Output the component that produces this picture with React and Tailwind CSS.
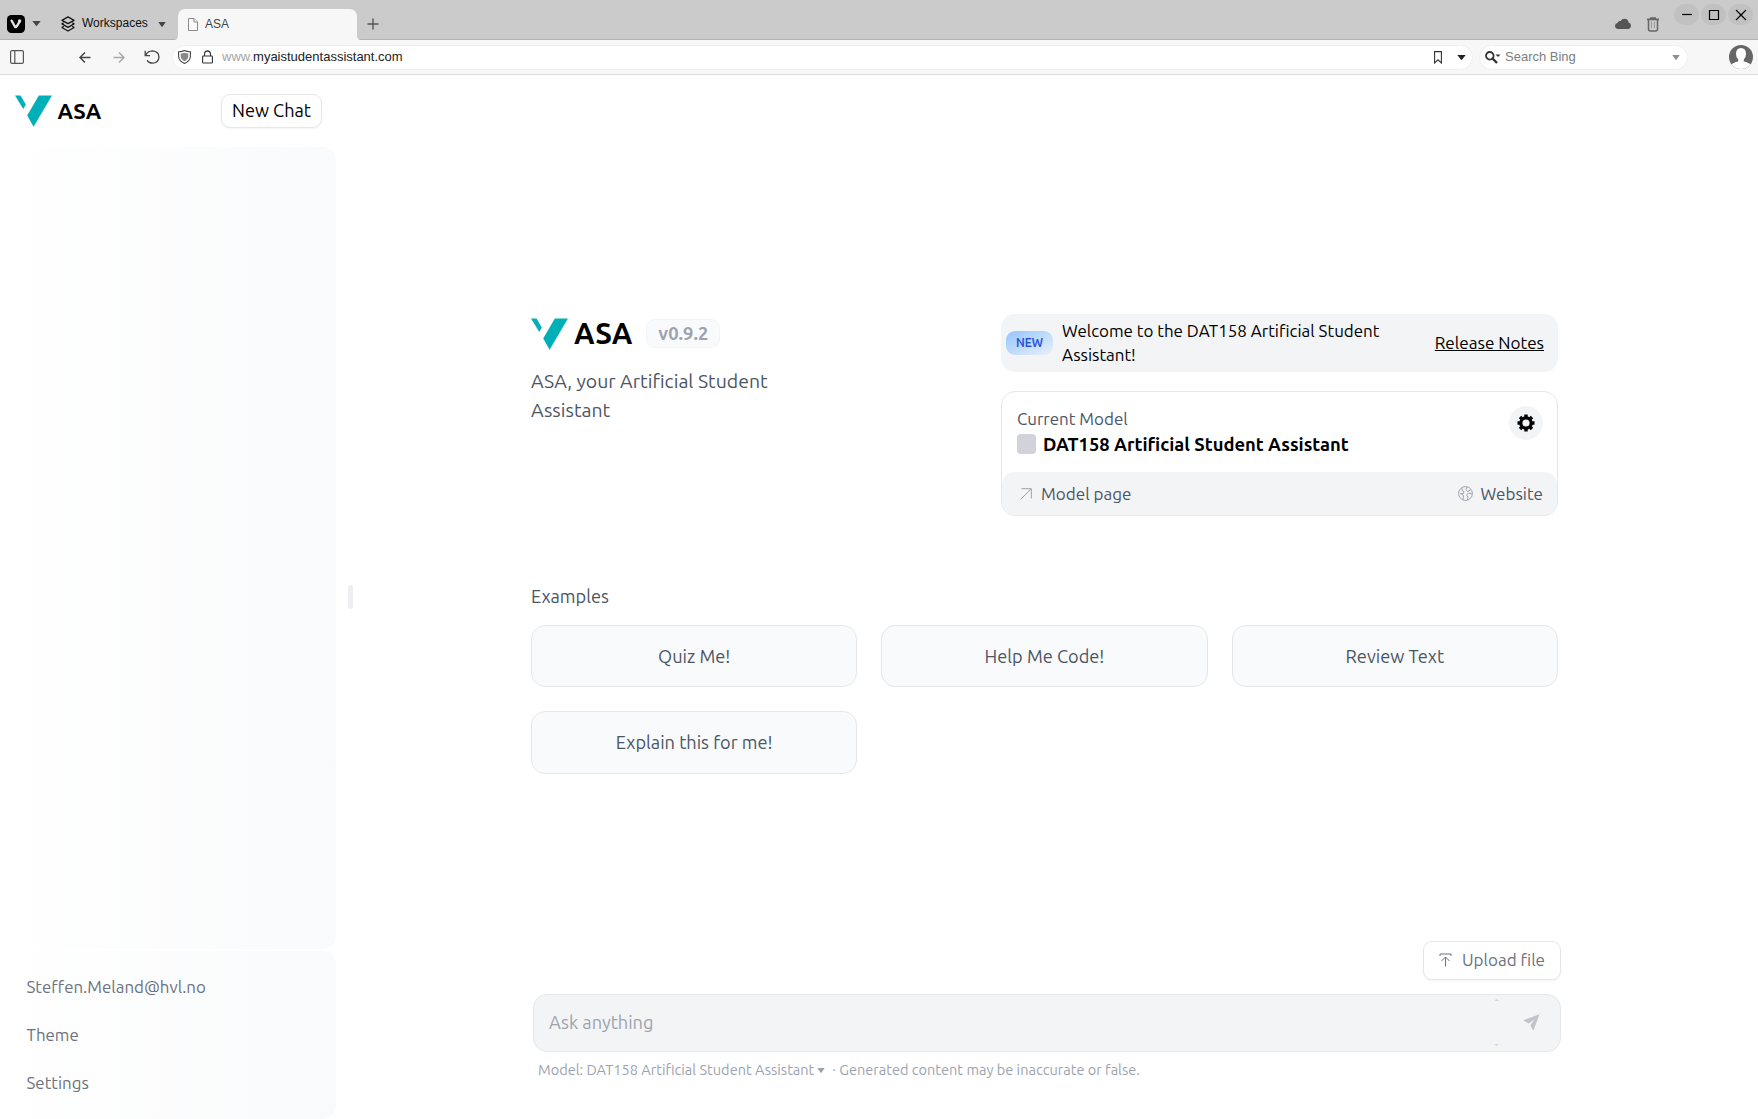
const Caret = ({ className = "", w = 8, h = 5 }) => (
  <svg className={className} width={w} height={h} viewBox="0 0 8 5" preserveAspectRatio="none" fill="currentColor"><path d="M0.3 0H7.7L4.6 4.6Q4 5.2 3.4 4.6Z" /></svg>
);

const Logo = ({ className }) => (
  <svg className={className} width="37" height="32" viewBox="0 0 37 32" fill="#00b0b9">
    <path d="M0 0.5H5.6L10.8 9.6L8.3 14Z" />
    <path d="M23.8 0.5H37L18.6 31.8L12.2 20.5Z" />
  </svg>
);

function TabBar() {
  return (
    <div className="flex h-10 items-stretch border-b border-[#b2b2b2] bg-[#cbcbcb] text-[12px] text-[#111]">
      <svg className="mt-[15px] ml-[7px]" width="18" height="18" viewBox="0 0 18 18">
        <rect width="18" height="18" rx="4.5" fill="#000" />
        <path d="M4.6 5.6L8.3 12.2H9.1Q10.1 10.8 12.6 6.6" fill="none" stroke="#e4e4e4" strokeWidth="2.3" strokeLinecap="round" strokeLinejoin="round" />
        <circle cx="12.6" cy="6" r="1.7" fill="#e4e4e4" />
      </svg>
      <Caret className="mt-[21px] ml-[7px] text-[#444]" w={9} h={5} />
      <svg className="mt-[16px] ml-[20px]" width="14" height="16" viewBox="0 0 15 16" preserveAspectRatio="none" fill="none" stroke="#111" strokeWidth="1.3" strokeLinejoin="round">
        <path d="M7.5 0.9L14 4.3L7.5 7.7L1 4.3Z" />
        <path d="M3 6.8L1 7.9L7.500 11.300L14 7.900L12 6.800" />
        <path d="M3 10.4L1 11.500L7.500 15L14 11.500L12 10.400" />
      </svg>
      <span className="mt-[14px] ml-[7px] w-[67px] leading-[18px]">Workspaces</span>
      <Caret className="mt-[22px] ml-[9px] text-[#444]" w={8} h={5} />
      <div className="relative ml-[12px] mt-[9px] -mb-px flex w-[179px] rounded-t-[7px] bg-[#f7f7f7] text-[#444]">
        <svg className="absolute bottom-0 -left-1" width="4" height="4" viewBox="0 0 4 4"><path d="M4 0V4H0Q3.5 4 4 0Z" fill="#f7f7f7" /></svg>
        <svg className="absolute bottom-0 -right-1" width="4" height="4" viewBox="0 0 4 4"><path d="M0 0V4H4Q0.500 4 0 0Z" fill="#f7f7f7" /></svg>
        <svg className="mt-[9px] ml-[10px]" width="10" height="13" viewBox="0 0 10 13" fill="#fafafa" stroke="#8a8a8a">
          <path d="M0.500 0.500H6L9.500 4V12.500H0.500Z" /><path d="M6 0.500V4H9.500" />
        </svg>
        <span className="mt-[6px] ml-[7px] leading-[18px]">ASA</span>
      </div>
      <svg className="mt-[18px] ml-[10px]" width="12" height="12" viewBox="0 0 12 12" stroke="#555" strokeWidth="1.4"><path d="M6 0.500V11.500M0.500 6H11.500" /></svg>
      <div className="ml-auto flex">
        <svg className="mt-[18px]" width="16" height="11" viewBox="0 0 16 11" fill="#555"><path d="M3.200 11Q0 10.800 0 7.800Q0.200 5.300 2.500 5Q3.200 2.600 5.600 3Q6.800 0.800 9.400 0.700Q13.200 0.900 13.600 4.600Q16 5.200 16 7.800Q15.800 10.800 13 11Z" /></svg>
        <svg className="mt-[17px] ml-[15px]" width="14" height="15" viewBox="0 0 14 15" fill="none" stroke="#666">
          <path d="M1 2.400H13M4 1H10" strokeWidth="1.600" /><path d="M2.500 3V12Q2.500 14 4.500 14H9.500Q11.500 14 11.500 12V3" strokeWidth="1.500" /><path d="M5.500 4.500V11M8.500 4.500V11" stroke="#999" />
        </svg>
        <div className="mt-1 ml-[14px] flex gap-[2px]">
          {["M1 5.500H11", "M1.500 1.500H10.500V10.500H1.500Z", "M1 1L11 11M11 1L1 11"].map((d) => (
            <div key={d} className="flex h-[21px] w-[25px] items-center justify-center rounded-full bg-[#c1c1c1]">
              <svg width="12" height="12" viewBox="0 0 12 12" fill="none" stroke="#000" strokeWidth="1.200" strokeLinejoin="round"><path d={d} /></svg>
            </div>
          ))}
        </div>
        <div className="w-[5px]" />
      </div>
    </div>
  );
}

function AddressBar() {
  return (
    <div className="flex h-[35px] items-center border-b border-[#dcdcdc] bg-[#f7f7f7] text-[13px]">
      <svg className="ml-[10px]" width="14" height="14" viewBox="0 0 14 14" fill="none" stroke="#555" strokeWidth="1.200"><rect x="0.600" y="0.600" width="12.800" height="12.800" rx="1.500" /><path d="M4.800 1V13" /></svg>
      <svg className="ml-[55px]" width="12" height="11" viewBox="0 0 12 11" fill="none" stroke="#444" strokeWidth="1.500"><path d="M11.500 5.500H1M6 0.500L1 5.500L6 10.500" /></svg>
      <svg className="ml-[22px]" width="12" height="11" viewBox="0 0 12 11" fill="none" stroke="#a8a8a8" strokeWidth="1.500"><path d="M0.500 5.500H11M6 0.500L11 5.500L6 10.500" /></svg>
      <svg className="ml-[19px]" width="16" height="14" viewBox="0 0 16 14" fill="none" stroke="#444" strokeWidth="1.300"><path d="M1.800 5.200Q3.400 1 8.500 0.800Q14.800 1.400 15 7Q14.600 13 8.500 13.200Q4.800 13 3 10.300" /><path d="M1.200 0.800V5.600H6" /></svg>
      <div className="ml-[12px] flex h-[25px] w-[1301px] items-center rounded-full border border-[#efefef] bg-white">
        <svg className="ml-[5px]" width="13" height="14" viewBox="0 0 13 14" fill="none"><path d="M0.600 1.800Q4 1.900 6.500 0.600Q9 1.900 12.400 1.800V6.500Q12 11.200 6.500 13.400Q1 11.200 0.600 6.500Z" stroke="#444" strokeWidth="1.100" /><path d="M2.700 3.600Q5 3.500 6.500 2.800Q8 3.500 10.300 3.600V6.600Q10 9.600 6.500 11.200Q3 9.600 2.700 6.600Z" fill="#888" /></svg>
        <svg className="ml-[11px]" width="11" height="14" viewBox="0 0 11 14" fill="none" stroke="#333" strokeWidth="1.100"><rect x="0.600" y="6" width="9.800" height="7" rx="0.800" /><path d="M2.500 6V3.800Q2.700 1 5.500 0.900Q8.300 1 8.500 3.800V6" /></svg>
        <span className="ml-[9px] text-[#a5a5a5]">www.<span className="text-[#222]">myaistudentassistant.com</span></span>
        <svg className="ml-auto" width="8" height="13" viewBox="0 0 8 13" fill="none" stroke="#333" strokeWidth="1.100"><path d="M0.600 0.600H7.400V12L4 8.800L0.600 12Z" /></svg>
        <Caret className="mr-[6px] ml-[15px] text-[#222]" w={9} h={5} />
      </div>
      <div className="ml-[6px] flex h-[25px] w-[209px] items-center rounded-full border border-[#efefef] bg-white">
        <svg className="ml-[5px]" width="16" height="13" viewBox="0 0 16 13" fill="none" stroke="#333"><circle cx="4.800" cy="4.800" r="3.800" strokeWidth="1.800" /><path d="M7.500 7.500L12 12" strokeWidth="2.400" /><path d="M10.500 3.500H15.500L13 6Z" fill="#333" stroke="none" /></svg>
        <span className="ml-[4px] text-[#7d7d7d]">Search Bing</span>
        <Caret className="mr-[7px] ml-auto text-[#8e8e8e]" w={8} h={5} />
      </div>
      <svg className="ml-auto mr-[5px]" width="24" height="24" viewBox="0 0 24 24">
        <defs><clipPath id="avatar"><circle cx="12" cy="12" r="12" /></clipPath></defs>
        <g clipPath="url(#avatar)"><rect width="24" height="24" fill="#666" /><path d="M12 3Q17 3.200 17 9Q17 12.500 14.800 14.500V16.500Q20 17.500 22 20V24H2V20Q4 17.500 9.200 16.500V14.500Q7 12.500 7 9Q7 3.200 12 3Z" fill="#fff" /></g>
      </svg>
    </div>
  );
}

const panel = "rounded-r-[14px] bg-linear-to-l from-gray-50 from-0% to-white to-100%";

function Sidebar() {
  return (
    <nav className="flex w-[336px] shrink-0 flex-col">
      <div className="flex h-[72px] items-center pr-[14px]">
        <Logo className="ml-[15px]" />
        <span className="-mt-0.5 ml-[5.5px] text-[22px] font-bold text-black">ASA</span>
        <button className="ml-auto h-[34px] w-[101px] rounded-[9px] border border-gray-200 bg-white text-[18.1px] text-black shadow-xs">New Chat</button>
      </div>
      <div className={`${panel} h-[802px]`} />
      <div className={`${panel} mt-[2px] flex h-[168px] flex-col pt-3 pl-[26.500px] text-[16.9px] leading-[48px] text-[#6b7280]`}>
        <span>Steffen.Meland@hvl.no</span>
        <span>Theme</span>
        <span>Settings</span>
      </div>
    </nav>
  );
}

function Intro() {
  return (
    <div className="pt-px">
      <div className="flex h-[38px] items-center">
        <Logo className="" />
        <span className="ml-[6px] text-[29.3px] font-bold text-black">ASA</span>
        <span className="-mt-px ml-[14px] flex h-[29px] w-[74px] items-center justify-center rounded-[9px] border border-gray-100 bg-gray-50 text-[18.4px] font-bold text-[#9ca3af]">v0.9.2</span>
      </div>
      <p className="mt-[14px] w-[260px] text-[19.45px] leading-[29px] text-[#4b5563]">ASA, your Artificial Student Assistant</p>
    </div>
  );
}

function ModelInfo() {
  return (
    <div>
      <div className="flex h-[58px] items-center rounded-[14px] bg-gray-100 pr-[14px] pl-[5px] text-[16.97px] text-black">
        <span className="flex h-6 w-[47px] items-center justify-center rounded-[9px] bg-linear-to-br from-[#93c5fd] to-[#eaf0f8] text-[12px] font-medium text-[#1d4ed8] [-webkit-text-stroke:0.2px]">NEW</span>
        <span className="ml-[9px] w-[330px] leading-6">Welcome to the DAT158 Artificial Student Assistant!</span>
        <a className="ml-auto text-[17.1px] underline">Release Notes</a>
      </div>
      <div className="mt-[19px] flex h-[125px] flex-col justify-between rounded-[14px] border border-gray-200">
        <div className="flex justify-between pt-[15px] pr-[14px] pl-[15px]">
          <div>
            <div className="text-[16.97px] leading-6 text-[#4b5563]">Current Model</div>
            <div className="flex h-[27px] items-center text-[18.4px] font-bold text-black">
              <span className="-mt-px mr-[7px] h-[20px] w-[19px] rounded-[4px] bg-[#d1d2da]" />
              DAT158 Artificial Student Assistant
            </div>
          </div>
          <div className="-mt-px flex size-[34px] items-center justify-center rounded-full bg-gray-100">
            <svg width="18" height="18" viewBox="0 0 18 18" fill="none" stroke="#000">
              <circle cx="9" cy="9" r="5.200" strokeWidth="3.200" />
              <path d="M9 0.500V3M9 15V17.500M0.500 9H3M15 9H17.500M3 3L4.800 4.800M13.200 13.200L15 15M3 15L4.800 13.200M13.200 4.800L15 3" strokeWidth="3.400" />
            </svg>
          </div>
        </div>
        <div className="flex h-[43px] items-center rounded-[13px] bg-gray-100 pr-[14px] pl-[18px] text-[17.05px] text-[#4b5563]">
          <svg width="12" height="12" viewBox="0 0 12 12" fill="none" stroke="#9ca3af"><path d="M0.500 11.500L11 1M1.500 0.700H11.300V10.500" /></svg>
          <span className="ml-[9px]">Model page</span>
          <svg className="ml-auto" width="15" height="15" viewBox="0 0 15 15" fill="none" stroke="#9ca3af" strokeLinejoin="round"><circle cx="7.500" cy="7.500" r="6.900" /><path d="M4 2V4.500L6 5.500L5.500 7.500L2.500 7.500M2.500 7.500L5.500 9.500L5 13.500M9 1L8 3.500L9.500 5.500L12.500 4M14 8L10.500 7L8.500 9L10 11L9.500 13.800" /></svg>
          <span className="ml-[8px]">Website</span>
        </div>
      </div>
    </div>
  );
}

function Composer() {
  return (
    <div className="ml-[2px] mr-[-3px] flex flex-col">
      <button className="flex h-[39px] w-[138px] items-center self-end rounded-[9px] border border-gray-200 bg-white pb-px pl-[15px] text-[17px] text-[#6b7280] shadow-xs">
        <svg width="13" height="14" viewBox="0 0 13 14" fill="none" stroke="currentColor"><path d="M1 3V1H12V3M6.500 13.500V4M2.500 8L6.500 4L10.500 8" /></svg>
        <span className="ml-[10px]">Upload file</span>
      </button>
      <div className="mt-[14px] flex h-[58px] items-center rounded-[14px] border border-gray-200 bg-gray-100 pl-[15px] text-[18.2px] text-[#9ca3af]">
        Ask anything
        <div className="ml-auto flex h-[47px] flex-col justify-between text-gray-300">
          <Caret className="rotate-180" w={5} h={2} />
          <Caret w={5} h={2} />
        </div>
        <svg className="mr-[20.500px] ml-[24px]" width="17" height="17" viewBox="0 0 17 17" fill="#bfc3ca"><path d="M16.500 0.300L0.200 6.300L5.600 9.600L11.800 5.200L7.400 11.200L10.300 16.800Z" /></svg>
      </div>
      <div className="mt-[9px] flex items-center pl-[5px] text-[14.55px] leading-[18px] text-[#9ca3af]">
        Model: DAT158 Artificial Student Assistant
        <Caret className="mt-[2px] ml-[3px]" w={8} h={5} />
        <span className="ml-[7px]">· Generated content may be inaccurate or false.</span>
      </div>
    </div>
  );
}

export default function App() {
  return (
    <div className="flex h-[1119px] w-[1758px] flex-col overflow-hidden bg-white">
      <header className="font-['Liberation_Sans',sans-serif]">
        <TabBar />
        <AddressBar />
      </header>
      <div className="flex min-h-0 flex-1 font-[Ubuntu,'Noto_Sans',sans-serif]">
        <Sidebar />
        <div className="mt-[510px] ml-[12px] h-6 w-[5px] shrink-0 rounded-full bg-gray-200/70" />
        <main className="ml-[178px] flex w-[1027px] flex-col pt-[239px]">
          <section className="grid grid-cols-[470px_557px]">
            <Intro />
            <ModelInfo />
          </section>
          <h2 className="mt-[67px] text-[18.2px] leading-[26px] text-[#4b5563]">Examples</h2>
          <div className="mt-[16px] grid grid-cols-3 gap-6">
            {["Quiz Me!", "Help Me Code!", "Review Text", "Explain this for me!"].map((t) => (
              <button key={t} className="h-[62.400px] rounded-[14px] border border-gray-200 bg-gray-50 pt-px text-[18.2px] text-[#4b5563]">{t}</button>
            ))}
          </div>
          <div className="h-[167.200px]" />
          <Composer />
        </main>
      </div>
    </div>
  );
}
